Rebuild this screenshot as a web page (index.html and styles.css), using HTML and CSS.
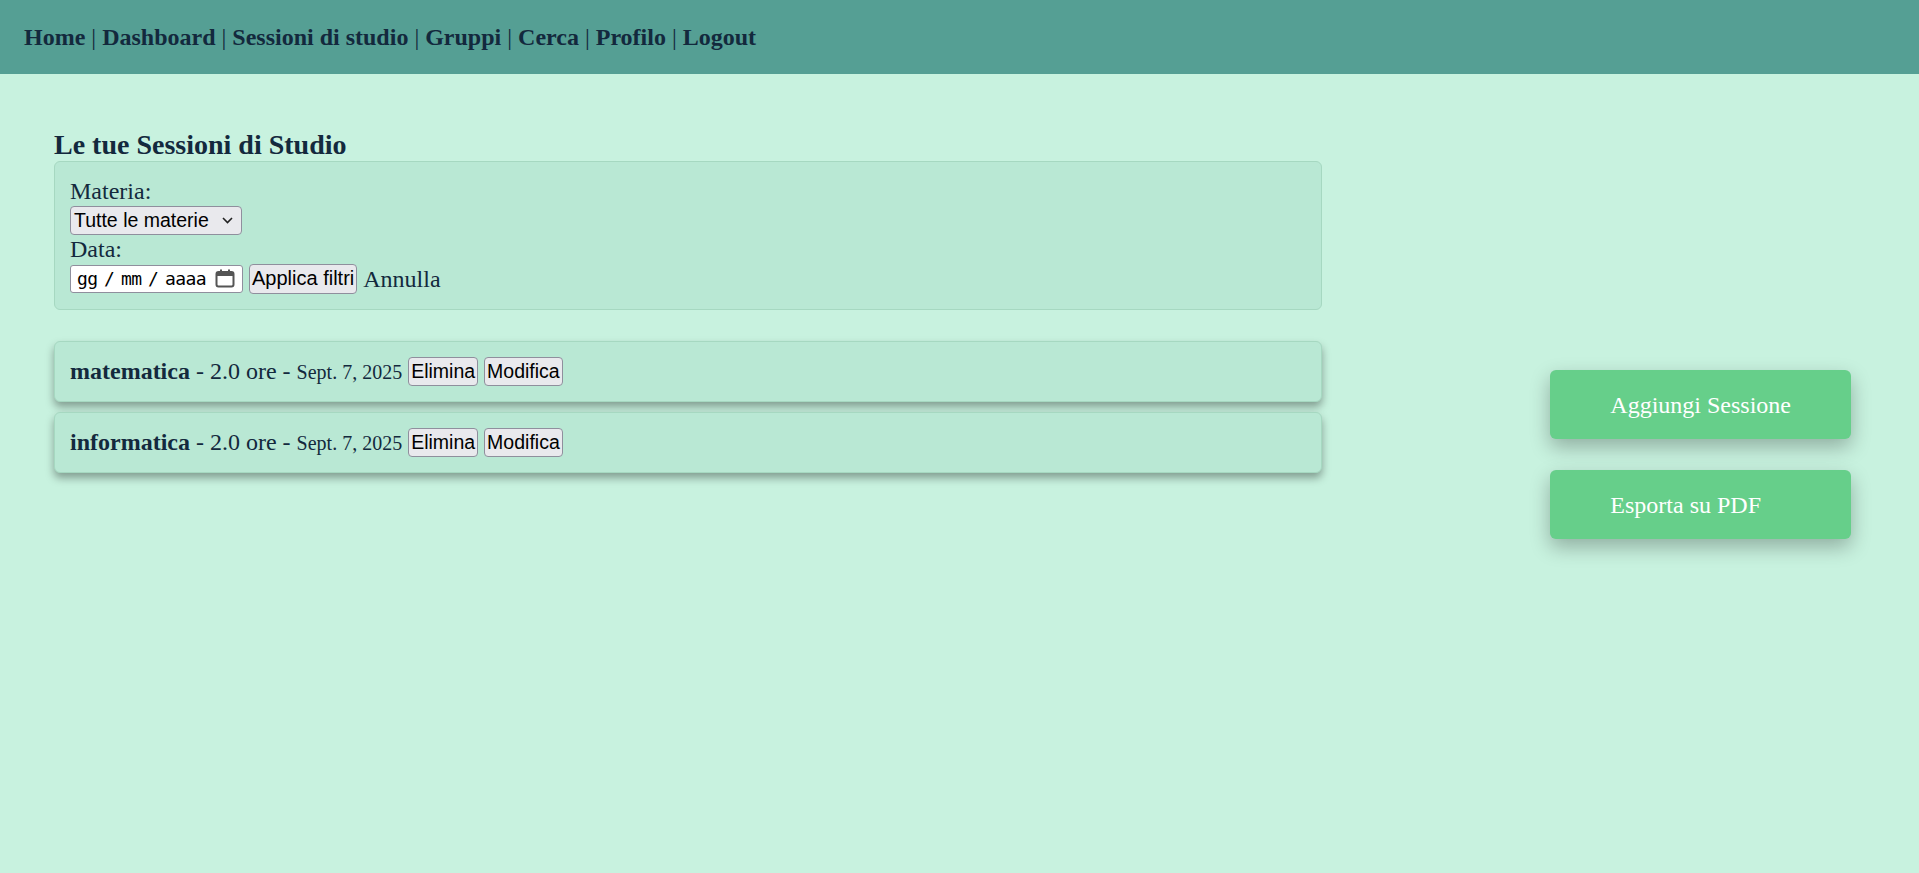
FILE: index.html
```html
<!DOCTYPE html>
<html lang="it">
<head>
<meta charset="utf-8">
<title>Sessioni di studio</title>
<link rel="stylesheet" href="styles.css">
</head>
<body>
<nav class="topnav">
  <a href="#">Home</a> | <a href="#">Dashboard</a> | <a href="#">Sessioni di studio</a> | <a href="#">Gruppi</a> | <a href="#">Cerca</a> | <a href="#">Profilo</a> | <a href="#">Logout</a>
</nav>
<div class="page">
  <section class="main-col">
    <h3 class="title">Le tue Sessioni di Studio</h3>
    <form class="filters">
      <div class="frow label-row">Materia:</div>
      <div class="frow select-row">
        <span class="select">Tutte le materie
          <svg class="chev" width="11" height="7" viewBox="0 0 11 7"><path d="M1 1 L5.5 5.5 L10 1" fill="none" stroke="#222" stroke-width="1.6"/></svg>
        </span>
      </div>
      <div class="frow label-row">Data:</div>
      <div class="frow input-row">
        <span class="date"><span class="date-text">gg / mm / aaaa</span>
          <svg class="cal" width="20" height="19" viewBox="0 0 20 19"><rect x="1.5" y="3" width="17" height="14.5" rx="2" fill="none" stroke="#555" stroke-width="2"/><rect x="1.5" y="3" width="17" height="4" fill="#555"/><rect x="5" y="0.5" width="2" height="4" fill="#555"/><rect x="13" y="0.5" width="2" height="4" fill="#555"/></svg>
        </span>
        <button type="button" class="btn btn-apply">Applica filtri</button>
        <a href="#" class="cancel">Annulla</a>
      </div>
    </form>
    <ul class="sessions">
      <li class="card">
        <span class="card-text"><b>matematica</b> - 2.0 ore - <small>Sept. 7, 2025</small></span>
        <button type="button" class="btn">Elimina</button>
        <button type="button" class="btn">Modifica</button>
      </li>
      <li class="card">
        <span class="card-text"><b>informatica</b> - 2.0 ore - <small>Sept. 7, 2025</small></span>
        <button type="button" class="btn">Elimina</button>
        <button type="button" class="btn">Modifica</button>
      </li>
    </ul>
  </section>
  <aside class="actions">
    <a href="#" class="action">Aggiungi Sessione</a>
    <a href="#" class="action">Esporta su PDF</a>
  </aside>
</div>
</body>
</html>
```
FILE: styles.css
```css
html, body {
  margin: 0;
  padding: 0;
}
body {
  background: #c8f2df;
  color: #13293d;
  font-family: "Liberation Serif", "Times New Roman", serif;
  font-size: 24px;
  min-height: 873px;
}
.topnav {
  background: #559f94;
  height: 74px;
  box-sizing: border-box;
  padding: 23px 24px;
  line-height: 28px;
  color: #13293d;
  white-space: nowrap;
}
.topnav a {
  color: #13293d;
  text-decoration: none;
  font-weight: bold;
}
.page {
  display: flex;
  align-items: flex-start;
  padding: 55px 68px 0 54px;
}
.main-col {
  flex: 0 0 1268px;
}
.title {
  margin: 0;
  font-size: 28px;
  line-height: 32px;
  font-weight: bold;
}
.filters {
  margin: 0;
  background: #b9e8d4;
  border: 1px solid #a6d8c1;
  border-radius: 6px;
  padding: 15px;
}
.frow {
  display: flex;
  align-items: center;
  gap: 6px;
}
.label-row {
  height: 28px;
  line-height: 28px;
}
.select-row {
  height: 30px;
  align-items: flex-start;
  padding-top: 1px;
  box-sizing: border-box;
}
.input-row {
  height: 31px;
}
.select {
  box-sizing: border-box;
  width: 172px;
  height: 29px;
  display: inline-flex;
  align-items: center;
  justify-content: space-between;
  padding: 0 8px 0 3px;
  background: #e9e9ed;
  border: 1px solid #8f8f9d;
  border-radius: 4px;
  font-family: "Liberation Sans", Arial, sans-serif;
  font-size: 19.5px;
  color: #000;
}
.date {
  box-sizing: border-box;
  width: 173px;
  height: 28px;
  display: inline-flex;
  align-items: center;
  justify-content: space-between;
  padding: 0 7px 0 6px;
  background: #fff;
  border: 1px solid #8f8f9d;
  border-radius: 3px;
  color: #000;
}
.date-text {
  font-family: "DejaVu Sans Mono", "Liberation Mono", monospace;
  font-size: 18px;
  letter-spacing: -0.6px;
  word-spacing: -3.6px;
}
.btn {
  box-sizing: border-box;
  height: 29px;
  padding: 0 2px;
  background: #e9e9ed;
  border: 1px solid #8f8f9d;
  border-radius: 4px;
  font-family: "Liberation Sans", Arial, sans-serif;
  font-size: 19.5px;
  color: #000;
}
.btn-apply {
  height: 30px;
  font-size: 20px;
}
.cancel {
  color: #13293d;
  text-decoration: none;
  line-height: 28px;
}
.sessions {
  list-style: none;
  margin: 31px 0 0;
  padding: 0;
}
.card {
  display: flex;
  align-items: center;
  gap: 6px;
  height: 29px;
  padding: 15px;
  margin-bottom: 10px;
  background: #b9e8d4;
  border: 1px solid #a6d8c1;
  border-radius: 6px;
  box-shadow: 0 5px 9px rgba(0, 0, 0, 0.35);
}
.card-text {
  line-height: 28px;
  white-space: nowrap;
}
.card-text small {
  font-size: 20px;
}
.actions {
  margin-left: auto;
  padding-top: 241px;
  display: flex;
  flex-direction: column;
  gap: 31px;
}
.action {
  display: block;
  padding: 21px 60px 20px;
  line-height: 28px;
  background: #66cf8a;
  color: #fff;
  text-decoration: none;
  border-radius: 6px;
  box-shadow: 0 8px 20px rgba(0, 0, 0, 0.28);
}
```
